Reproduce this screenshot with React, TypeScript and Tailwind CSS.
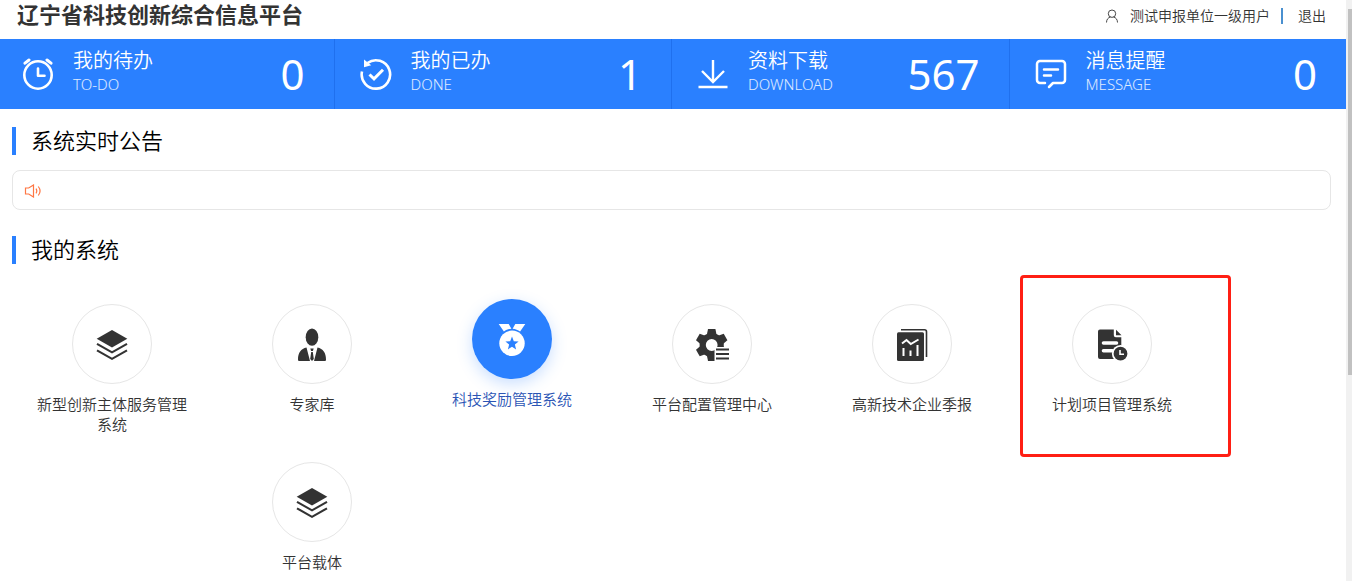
import React from 'react';

const AlarmIcon = () => (
  <svg viewBox="0 0 32 32" className="size-8" fill="none" stroke="currentColor" strokeWidth="2.6" strokeLinecap="round" strokeLinejoin="round">
    <circle cx="16" cy="17" r="13.7" />
    <path d="M3 5.2 7 2M29 5.2 25 2" strokeWidth="3" />
    <path d="M16 10.5v7.3h6.5" />
  </svg>
);

const DoneIcon = () => (
  <svg viewBox="0 0 32 32" className="size-8" fill="none" stroke="currentColor" strokeWidth="2.6">
    <path d="M2 13.5A14.2 14.2 0 1 0 7.5 5" />
    <path d="M4 1.5v7.7l7.2-2z" fill="currentColor" stroke="none" />
    <path d="m9.5 16.5 4.5 4.3 9-9" strokeWidth="3" />
  </svg>
);

const DownloadIcon = () => (
  <svg viewBox="0 0 32 32" className="size-8" fill="none" stroke="currentColor" strokeWidth="2.4">
    <path d="M16 2v22M5 13l11 11 11-11M1.5 29h29" />
  </svg>
);

const MessageIcon = () => (
  <svg viewBox="0 0 32 32" className="size-8" fill="none" stroke="currentColor" strokeWidth="2.5" strokeLinecap="round" strokeLinejoin="round">
    <path d="M10 25H5a3 3 0 0 1-3-3V6a3 3 0 0 1 3-3h22a3 3 0 0 1 3 3v16a3 3 0 0 1-3 3h-9l-4 4" />
    <path d="M9 11.5h14M9 17.5h7" />
  </svg>
);

const UserIcon = () => (
  <svg viewBox="0 0 14 14" className="size-3.5" fill="none" stroke="currentColor" strokeWidth="0.9">
    <circle cx="7" cy="4.7" r="3.7" />
    <path d="M1.5 13.5c0-3 1.7-5 4-5.5M12.5 13.5c0-3-1.7-5-4-5.5" />
  </svg>
);

const SpeakerIcon = () => (
  <svg viewBox="0 0 18 14" className="h-3.5 w-[18px]" fill="none" stroke="currentColor" strokeWidth="1.2">
    <path d="M1.5 4v6h3.2l4.8 3V1L4.7 4zM12 4.7c1 1.5 1 3.1 0 4.6M14.3 2.5c2.2 2.8 2.2 6.2 0 9" />
  </svg>
);

const LayersIcon = () => (
  <svg viewBox="0 0 36 36" className="size-9" fill="none" stroke="currentColor" strokeWidth="2.1">
    <path d="m18 4 15.3 8.7L18 21.5 2.7 12.7z" fill="currentColor" stroke="none" />
    <path d="m3 17.8 15 8.5 15-8.5M3 24.3l15 8.5 15-8.5" />
  </svg>
);

const ExpertIcon = () => (
  <svg viewBox="0 0 36 36" className="size-9" fill="currentColor">
    <ellipse cx="18" cy="11.2" rx="6.3" ry="8.6" />
    <path d="M12.5 21.5 16 34.9H5.5c-1 0-1.500-.5-1.500-1.500 0-6.500 3-10.700 8.500-11.900zM23.500 21.500 20 34.900h10.500c1 0 1.500-.5 1.500-1.500 0-6.500-3-10.700-8.500-11.900z" />
    <path d="M16.3 22.5h3.4l-.8 2.500h-1.800zM17.200 26h1.600l1 7-1.800 2-1.800-2z" />
  </svg>
);

const MedalIcon = () => (
  <svg viewBox="0 0 36 36" className="size-9" fill="currentColor">
    <path d="M4.7 3h10l2.700 4.700c-2.900.2-5.400 1.200-7.500 2.900zM31.300 3h-10l-2.700 4.700c2.900.2 5.400 1.200 7.500 2.900z" />
    <circle cx="18" cy="22.3" r="12.7" />
    <path d="m18 15.600 1.800 4.600 4.800.3-3.700 3.100 1.200 4.800-4.100-2.700-4.100 2.700 1.200-4.800-3.700-3.100 4.800-.3z" className="fill-[#2a80ff]" />
  </svg>
);

const ConfigIcon = () => (
  <svg viewBox="0 0 36 36" className="size-9" fill="none">
    <circle cx="17.7" cy="19" r="9" stroke="currentColor" strokeWidth="6.2" />
    {[0, 60, 120, 180, 240, 300].map((deg) => (
      <path key={deg} d="M14 3h7.4l1.3 6.5h-10z" fill="currentColor" transform={`rotate(${deg} 17.7 19)`} />
    ))}
    <path d="M20.5 21H36v15H20.5z" className="fill-white" />
    <path d="M22 23.5h13M22 28h13M22 32.6h13" stroke="currentColor" strokeWidth="2" />
  </svg>
);

const ReportIcon = () => (
  <svg viewBox="0 0 36 36" className="size-9" fill="none">
    <path d="M7 3.8h23.5a2 2 0 0 1 2 2V31" stroke="currentColor" strokeWidth="1.6" />
    <rect x="3" y="6.3" width="27" height="28.7" rx="1.5" fill="currentColor" />
    <path d="m8 17.5 4.5-3.5 4.3 4 7.7-4.5" stroke="white" strokeWidth="2" />
    <path d="M9.5 22v8M16.5 24.5V30M23.5 19v11" stroke="white" strokeWidth="2" />
  </svg>
);

const PlanIcon = () => (
  <svg viewBox="0 0 36 36" className="size-9" fill="none">
    <path d="M6 3.5h13.8v5.7a2 2 0 0 0 2 2h5.5V33H6a2 2 0 0 1-2-2V5.5a2 2 0 0 1 2-2z" fill="currentColor" />
    <path d="M22 3.7 27.5 9.3H22z" fill="currentColor" />
    <path d="M9.5 17h13M9.5 24.7h9" stroke="white" strokeWidth="3.6" strokeLinecap="round" />
    <circle cx="26.5" cy="27.7" r="8.6" className="fill-white" />
    <circle cx="26.5" cy="27.7" r="6.9" fill="currentColor" />
    <path d="M26 24v4.3h4" stroke="white" strokeWidth="1.6" />
  </svg>
);

const STATS = [
  { title: '我的待办', sub: 'TO-DO', count: 0, Icon: AlarmIcon },
  { title: '我的已办', sub: 'DONE', count: 1, Icon: DoneIcon },
  { title: '资料下载', sub: 'DOWNLOAD', count: 567, Icon: DownloadIcon },
  { title: '消息提醒', sub: 'MESSAGE', count: 0, Icon: MessageIcon },
];

const SYSTEMS = [
  { name: '新型创新主体服务管理系统', Icon: LayersIcon },
  { name: '专家库', Icon: ExpertIcon },
  { name: '科技奖励管理系统', Icon: MedalIcon, active: true },
  { name: '平台配置管理中心', Icon: ConfigIcon },
  { name: '高新技术企业季报', Icon: ReportIcon },
  { name: '计划项目管理系统', Icon: PlanIcon, marked: true },
  { name: '平台载体', Icon: LayersIcon, className: 'col-start-2' },
];

const SectionTitle = ({ children }: { children: React.ReactNode }) => (
  <h2 className="border-l-4 border-[#2a80ff] pb-0.5 pl-[15px] text-[22px] leading-[26px] text-black">{children}</h2>
);

const App: React.FC = () => {
  return (
    <div className="flex h-screen overflow-hidden bg-white font-['Noto_Sans','Noto_Sans_CJK_SC',sans-serif] font-[350] text-[#333]">
      <div className="min-w-0 flex-1 overflow-hidden">
        <header className="flex h-[39px] items-start justify-between pr-5 pl-[17px]">
          <h1 className="text-[22px] leading-7 font-bold">辽宁省科技创新综合信息平台</h1>
          <div className="flex h-8 items-center text-sm">
            <UserIcon />
            <span className="ml-[11px]">测试申报单位一级用户</span>
            <span className="mx-[11px] h-4 border-l-2 border-[#4a90d0]" />
            <button type="button" className="ml-1">退出</button>
          </div>
        </header>

        <nav className="-ml-1 grid grid-cols-4 bg-[#2a80ff] text-white">
          {STATS.map(({ title, sub, count, Icon }) => (
            <a key={title} href="#" className="flex h-[70px] items-center border-l border-[#1f70ee] pr-[29px] pl-[25px]">
              <Icon />
              <div className="ml-[19px] flex-1 pb-1">
                <div className="text-xl leading-6">{title}</div>
                <div className="text-[15px] leading-[22px] text-white/85">{sub}</div>
              </div>
              <span className="text-[42px] leading-[70px] font-normal">{count}</span>
            </a>
          ))}
        </nav>

        <main className="pt-[18px] pr-[15px] pl-3">
          <SectionTitle>系统实时公告</SectionTitle>
          <div className="mt-[15px] flex h-10 items-center rounded-lg border border-[#e6e6e6] px-[11px] pt-0.5 text-[#ff7744]">
            <SpeakerIcon />
          </div>

          <div className="mt-[26px]">
            <SectionTitle>我的系统</SectionTitle>
          </div>
          <div className="mt-10 grid grid-cols-[repeat(auto-fill,200px)] gap-y-7">
            {SYSTEMS.map(({ name, Icon, active, marked, className }) => (
              <a
                key={name}
                href="#"
                className={`relative flex flex-col items-center px-[25px] ${active ? '-mt-[5px] text-[#2b55b5]' : ''} ${className ?? ''}`}
              >
                <span
                  className={`flex size-20 items-center justify-center rounded-full ${
                    active ? 'bg-[#2a80ff] text-white shadow-[0_5px_15px_rgba(42,128,255,0.25)]' : 'border border-[#e6e6e6]'
                  }`}
                >
                  <Icon />
                </span>
                <span className="mt-[10px] text-center text-[15px] leading-5">{name}</span>
                {marked && (
                  <span className="absolute -top-[29px] left-2 h-[182px] w-[211px] rounded-sm border-3 border-[#ff1f14]" />
                )}
              </a>
            ))}
          </div>
        </main>
      </div>

      {/* scroll track */}
      <div className="w-1.5 shrink-0 bg-[#f1f1f1] pt-[9px] pl-0.5">
        <div className="h-[64%] bg-[#c1c1c1]" />
      </div>
    </div>
  );
};

export default App;
